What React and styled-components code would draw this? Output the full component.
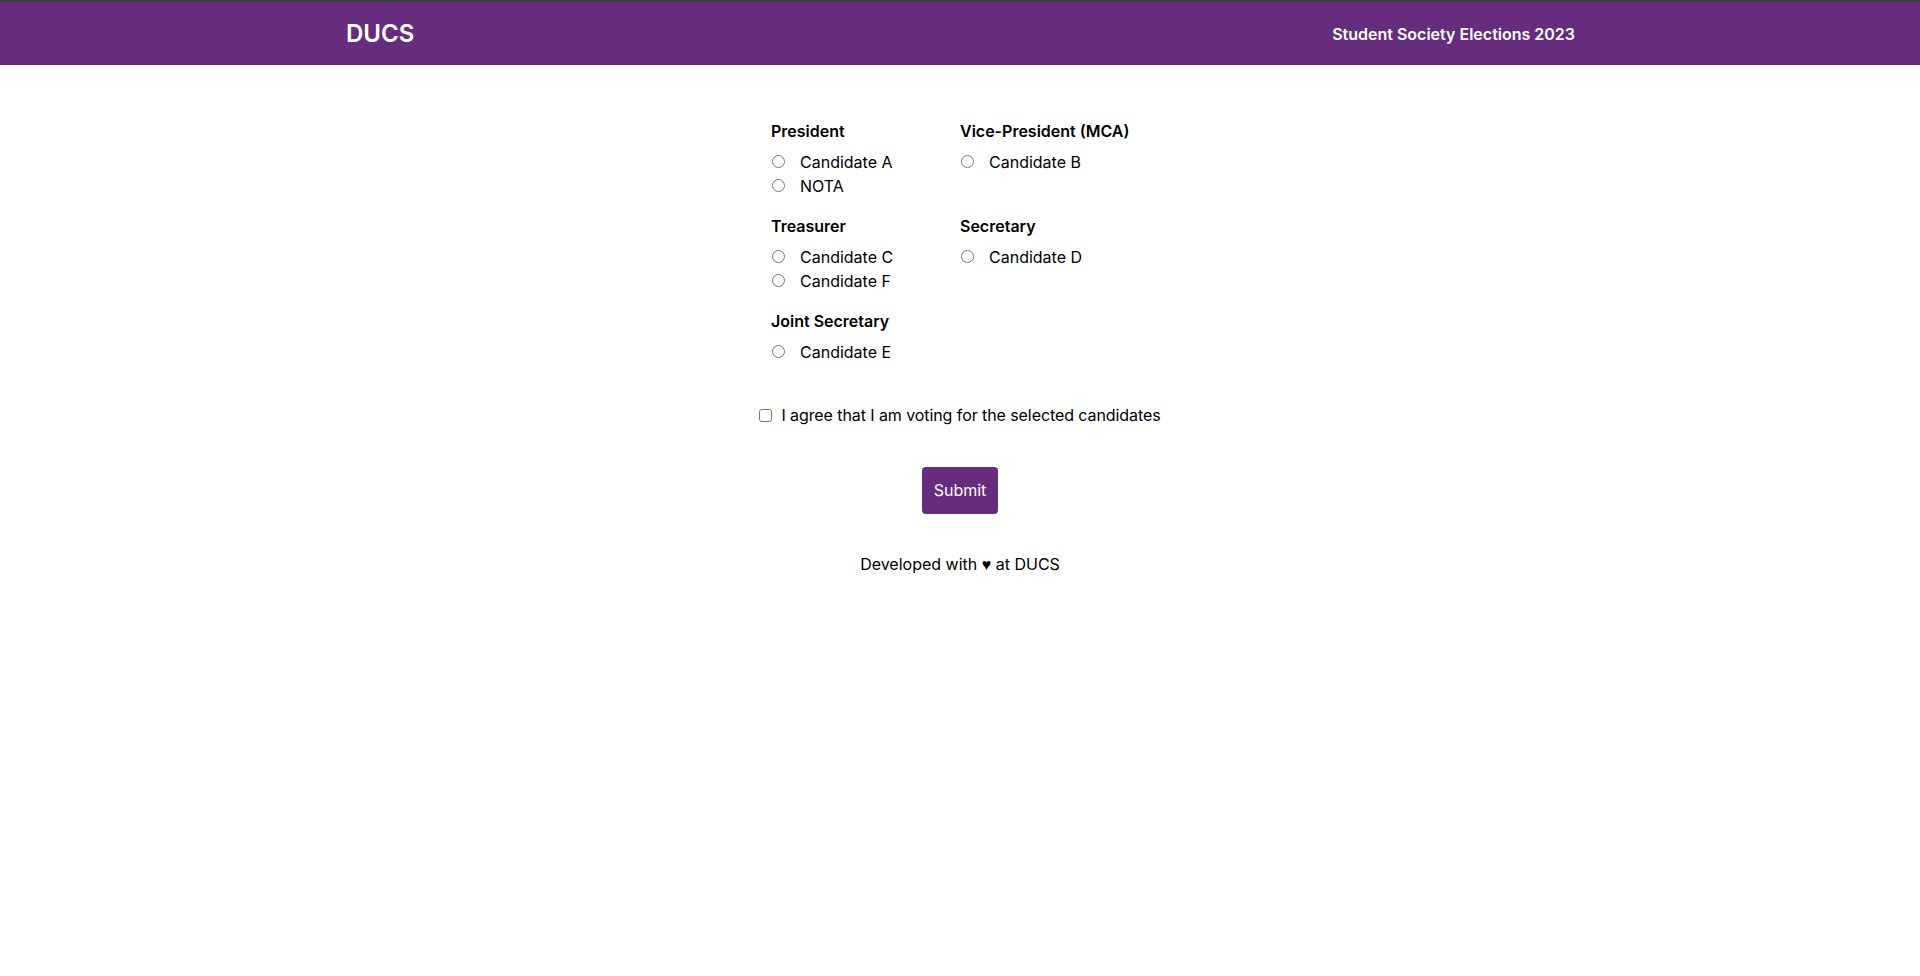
import React from "react";
import styled, { createGlobalStyle } from "styled-components";

const GlobalStyle = createGlobalStyle`
  html, body { margin: 0; padding: 0; background: #fff; }
  body { font-family: Inter, "Noto Sans", sans-serif; color: #000; font-size: 16px; }
  * { box-sizing: border-box; }
`;

const PURPLE = "#662c7e";

const Header = styled.header`
  background: ${PURPLE};
  border-top: 2px solid #3d3d3d;
  height: 65px;
  display: flex;
  align-items: center;
`;

const HeaderInner = styled.div`
  width: 1230px;
  margin: 0 auto;
  display: flex;
  align-items: center;
  justify-content: space-between;
  color: #fff;
  font-family: Inter, "Noto Sans", sans-serif;
`;

const Brand = styled.div`
  font-size: 24px;
  font-weight: 600;
  padding-left: 1px;
`;

const Title = styled.div`
  font-size: 16px;
  font-weight: 600;
`;

const Main = styled.main`
  padding-top: 54px;
  display: flex;
  flex-direction: column;
  align-items: center;
`;

const Ballot = styled.div`
  display: grid;
  grid-template-columns: 189px 189px;
  row-gap: 16px;
`;

const Post = styled.div`
  display: flex;
  flex-direction: column;
`;

const PostTitle = styled.div`
  font-weight: 600;
  font-size: 16px;
  line-height: 24px;
  margin-bottom: 7px;
`;

const Option = styled.label`
  display: flex;
  align-items: center;
  line-height: 24px;
  height: 24px;
  font-size: 16px;
`;

const Radio = styled.input.attrs({ type: "radio" })`
  width: 13px;
  height: 13px;
  margin: 0 15px 1px 1px;
`;

const Agree = styled.label`
  margin-top: 39px;
  display: inline-flex;
  align-items: center;
  line-height: 24px;
  font-size: 16px;
  letter-spacing: -0.08px;
`;

const Check = styled.input.attrs({ type: "checkbox" })`
  width: 13px;
  height: 13px;
  margin: 0 9px 0 0;
`;

const SubmitButton = styled.button`
  margin-top: 40px;
  background: ${PURPLE};
  color: #fff;
  border: none;
  border-radius: 4px;
  padding: 12px;
  font-family: Inter, "Noto Sans", sans-serif;
  font-size: 16px;
  line-height: 23px;
  cursor: pointer;
`;

const Footer = styled.footer`
  margin-top: 38px;
  font-size: 16px;
  line-height: 24px;
  text-align: center;
`;

const Heart = styled.span`
  font-family: "Liberation Sans", sans-serif;
`;

const posts = [
  { title: "President", name: "president", options: ["Candidate A", "NOTA"] },
  { title: "Vice-President (MCA)", name: "vp", options: ["Candidate B"] },
  { title: "Treasurer", name: "treasurer", options: ["Candidate C", "Candidate F"] },
  { title: "Secretary", name: "secretary", options: ["Candidate D"] },
  { title: "Joint Secretary", name: "jointsec", options: ["Candidate E"] },
];

export default function App() {
  return (
    <>
      <GlobalStyle />
      <Header>
        <HeaderInner>
          <Brand>DUCS</Brand>
          <Title>Student Society Elections 2023</Title>
        </HeaderInner>
      </Header>
      <Main>
        <Ballot>
          {posts.map((p) => (
            <Post key={p.name}>
              <PostTitle>{p.title}</PostTitle>
              {p.options.map((o) => (
                <Option key={o}>
                  <Radio name={p.name} value={o} />
                  {o}
                </Option>
              ))}
            </Post>
          ))}
        </Ballot>
        <Agree>
          <Check />I agree that I am voting for the selected candidates
        </Agree>
        <SubmitButton>Submit</SubmitButton>
        <Footer>
          Developed with <Heart>♥</Heart> at DUCS
        </Footer>
      </Main>
    </>
  );
}
